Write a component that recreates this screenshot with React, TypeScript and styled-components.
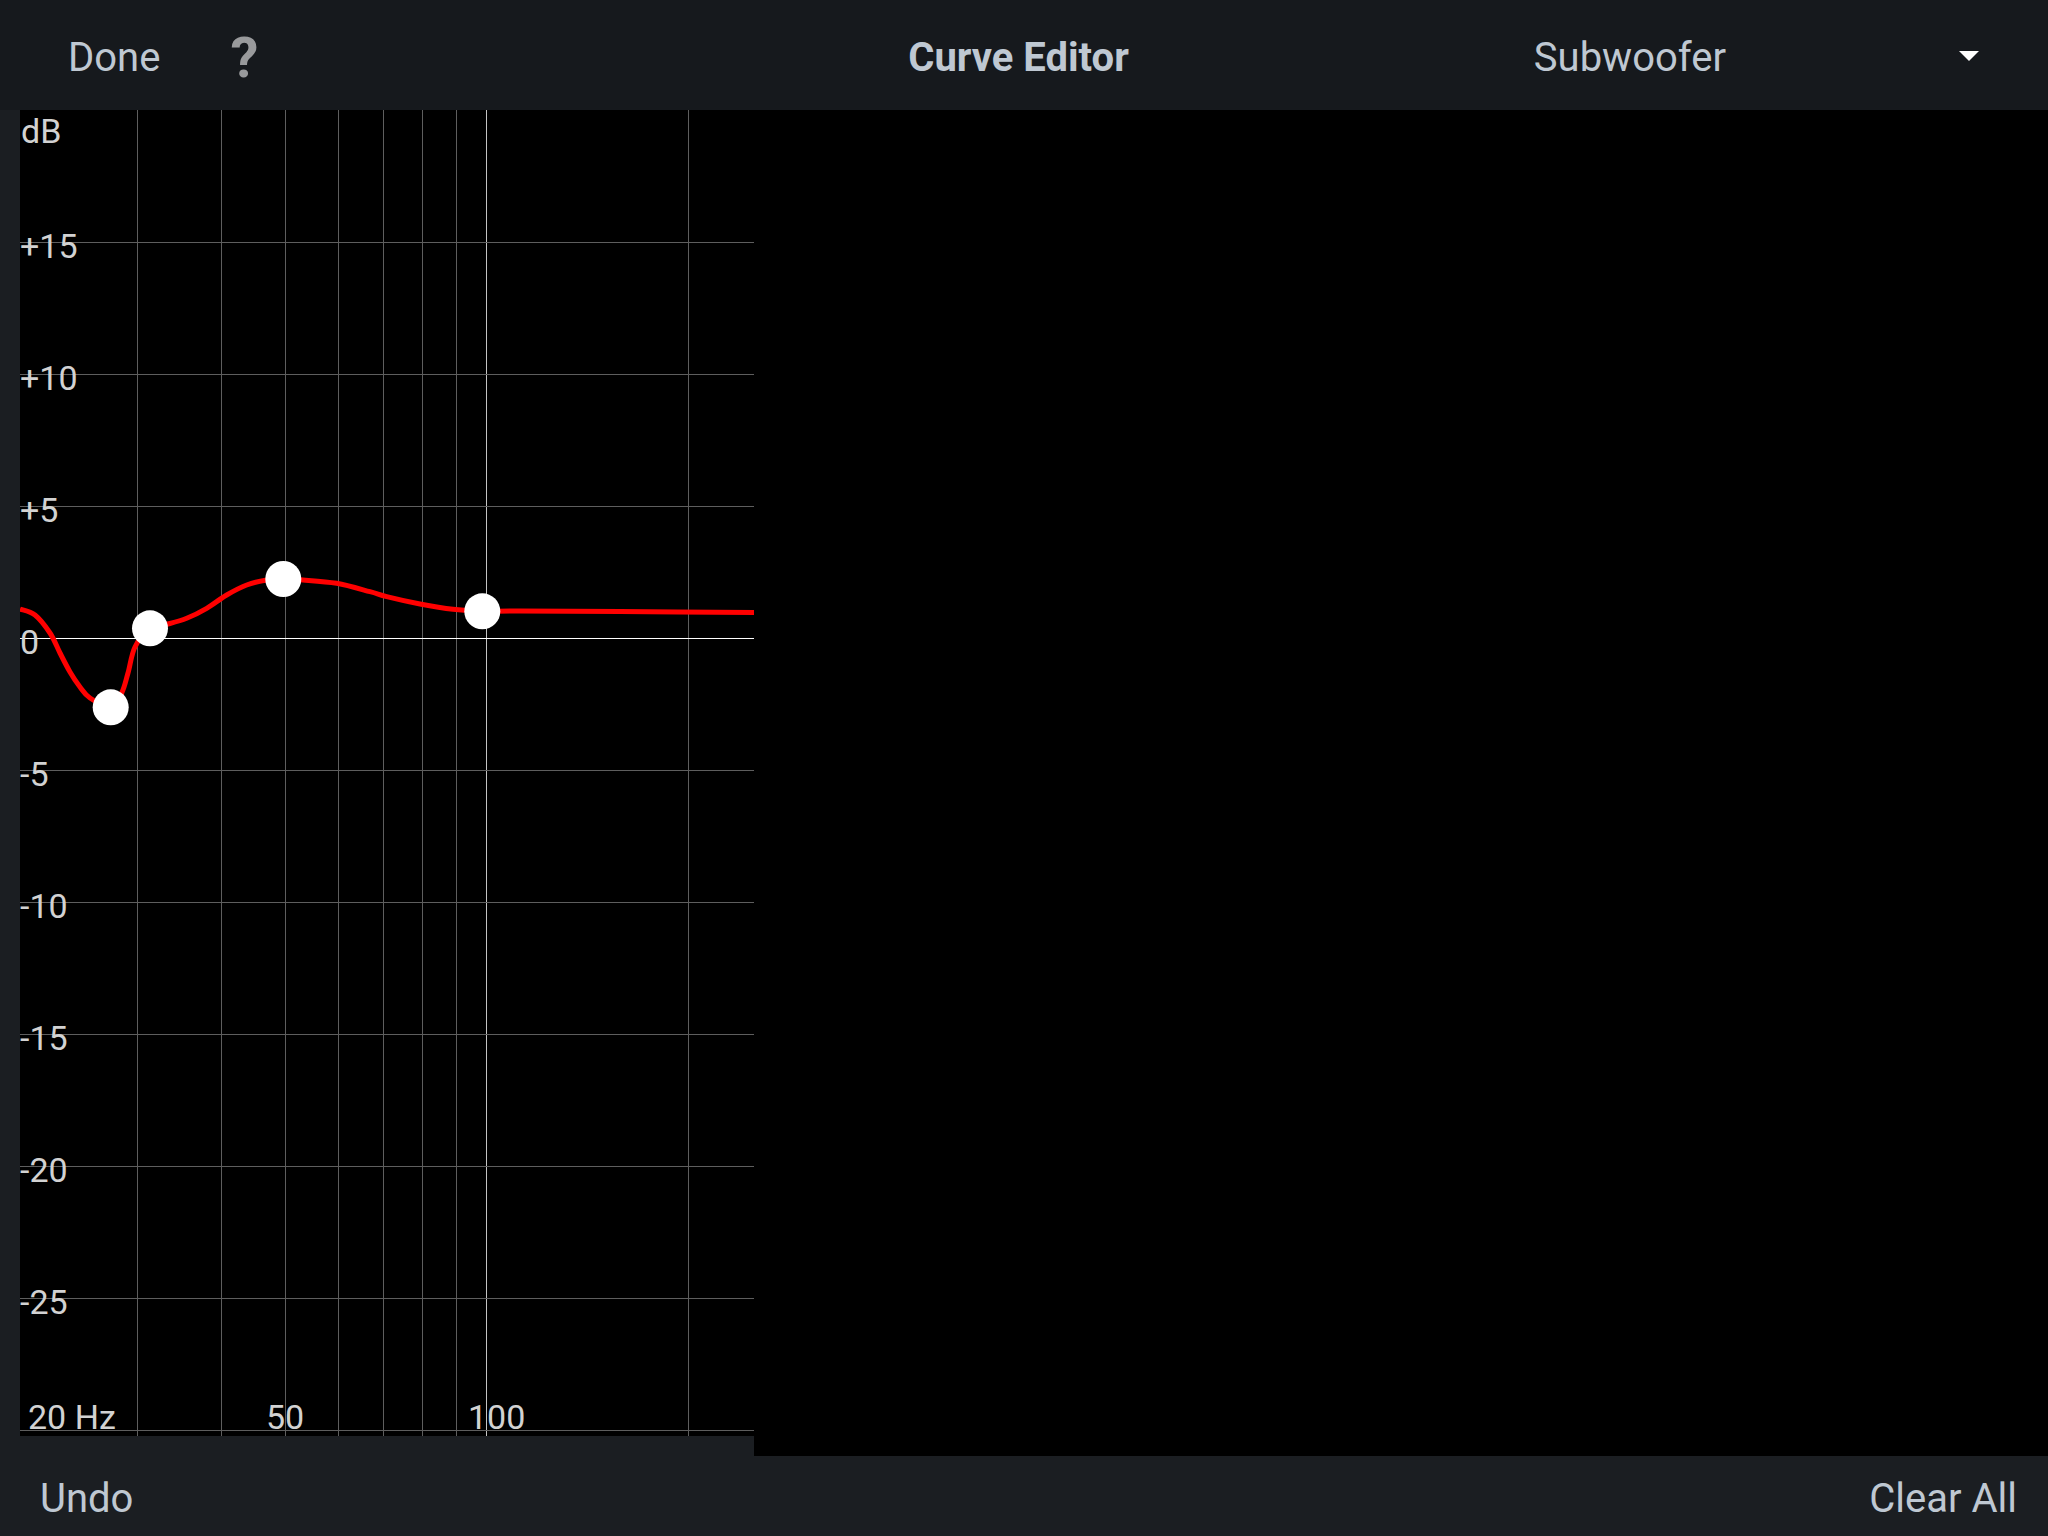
import React from 'react'
import styled, { createGlobalStyle } from 'styled-components'

const GlobalStyle = createGlobalStyle`
  html, body {
    margin: 0;
    padding: 0;
    background: #000;
  }
  body {
    font-family: Roboto, "Liberation Sans", sans-serif;
  }
`

const Screen = styled.div`
  width: 2048px;
  height: 1536px;
  display: flex;
  flex-direction: column;
  background: #000;
  overflow: hidden;
`

const Header = styled.div`
  height: 110px;
  flex: none;
  box-sizing: border-box;
  padding: 5px 0 0 68px;
  display: flex;
  align-items: center;
  background: #16191d;
`

const BarText = styled.span<{ $bold?: boolean; $gap?: number }>`
  font-size: 40px;
  font-weight: ${p => (p.$bold ? 700 : 400)};
  color: #bfc8d2;
  margin-left: ${p => p.$gap ?? 0}px;
  white-space: nowrap;
`

const Help = styled.span`
  font-size: 56px;
  font-weight: 700;
  color: #999a9c;
  margin-left: 70px;
`

const Caret = styled.svg`
  width: 20px;
  height: 10px;
  margin-left: 233px;
  margin-bottom: 4px;
`

const Body = styled.div`
  flex: 1;
  display: flex;
  min-height: 0;
`

const ChartColumn = styled.div`
  width: 754px;
  flex: none;
  display: flex;
  flex-direction: column;
  background: #1b1e22;
`

const ChartArea = styled.div`
  margin-left: 20px;
  width: 734px;
  height: 1326px;
  background: #000;
`

const Empty = styled.div`
  flex: 1;
  background: #000;
`

const Footer = styled.div`
  height: 80px;
  flex: none;
  box-sizing: border-box;
  padding: 5px 31px 0 40px;
  display: flex;
  align-items: center;
  justify-content: space-between;
  background: #1b1e22;
`

const Label = styled.text`
  font-family: Roboto, "Liberation Sans", sans-serif;
  font-size: 34px;
  fill: #d2d2d2;
`

const W = 734
const H = 1326

// log frequency axis, 668px per decade starting at 20 Hz
const xOf = (f: number) => 668 * Math.log10(f / 20)
// +20 dB at the top, 26.4px per dB
const yOf = (db: number) => 528 - db * 26.4

const freqLines = [30, 40, 50, 60, 70, 80, 90, 100, 200]
const dbLines = [15, 10, 5, 0, -5, -10, -15, -20, -25, -30]

const curvePts: [number, number][] = [
  [0, 499], [15, 505], [30, 523], [40, 543], [50, 562], [60, 577], [70, 588],
  [90.7, 597.3], [101.7, 583], [108, 563], [115, 537], [130, 518],
  [148, 514], [166.7, 508.3], [186.7, 498.3], [206.7, 485], [226.7, 475],
  [246.7, 470], [263.3, 469], [283, 470], [316.7, 473.3], [350, 481.7],
  [366.7, 486.7], [400, 494], [433, 499.3], [462.3, 501.3], [500, 501],
  [600, 501.5], [734, 502.5],
]

const handles: [number, number][] = [[90.7, 597.3], [130, 518.3], [263.3, 469], [462.3, 501.3]]

function smoothPath(pts: [number, number][]) {
  let d = `M${pts[0][0]},${pts[0][1]}`
  for (let i = 0; i < pts.length - 1; i++) {
    const p0 = pts[i - 1] || pts[i]
    const p1 = pts[i]
    const p2 = pts[i + 1]
    const p3 = pts[i + 2] || p2
    const c1x = p1[0] + (p2[0] - p0[0]) / 6
    const c1y = p1[1] + (p2[1] - p0[1]) / 6
    const c2x = p2[0] - (p3[0] - p1[0]) / 6
    const c2y = p2[1] - (p3[1] - p1[1]) / 6
    d += ` C${c1x.toFixed(1)},${c1y.toFixed(1)} ${c2x.toFixed(1)},${c2y.toFixed(1)} ${p2[0]},${p2[1]}`
  }
  return d
}

function dbText(db: number) {
  if (db > 0) return `+${db}`
  return `${db}`
}

function CurveChart() {
  return (
    <svg width={W} height={H} viewBox={`0 0 ${W} ${H}`}>
      {freqLines.map(f => (
        <line
          key={f}
          x1={xOf(f)}
          x2={xOf(f)}
          y1={0}
          y2={H}
          stroke={f === 100 ? '#c4c4c4' : '#5e5e5e'}
          strokeWidth={1}
          shapeRendering="crispEdges"
        />
      ))}
      {dbLines.map(db => (
        <line
          key={db}
          x1={0}
          x2={W}
          y1={yOf(db)}
          y2={yOf(db)}
          stroke={db === 0 ? '#ffffff' : '#5e5e5e'}
          strokeWidth={1}
          shapeRendering="crispEdges"
        />
      ))}

      <Label x={1} y={33}>dB</Label>
      {dbLines.filter(db => db > -30).map(db => (
        <Label key={db} x={0} y={yOf(db) + 16}>{dbText(db)}</Label>
      ))}

      <Label x={8} y={1319}>20 Hz</Label>
      <Label x={246} y={1319}>50</Label>
      <Label x={448} y={1319}>100</Label>

      <path d={smoothPath(curvePts)} fill="none" stroke="#ff0000" strokeWidth={5} strokeLinejoin="round" />
      {handles.map(([x, y], i) => (
        <circle key={i} cx={x} cy={y} r={18} fill="#ffffff" />
      ))}
    </svg>
  )
}

export default function App() {
  return (
    <>
      <GlobalStyle />
      <Screen>
        <Header>
          <BarText>Done</BarText>
          <Help>?</Help>
          <BarText $bold $gap={650}>Curve Editor</BarText>
          <BarText $gap={405}>Subwoofer</BarText>
          <Caret viewBox="0 0 20 10">
            <path d="M0,0 L20,0 L10,10 Z" fill="#ffffff" />
          </Caret>
        </Header>
        <Body>
          <ChartColumn>
            <ChartArea>
              <CurveChart />
            </ChartArea>
          </ChartColumn>
          <Empty />
        </Body>
        <Footer>
          <BarText>Undo</BarText>
          <BarText>Clear All</BarText>
        </Footer>
      </Screen>
    </>
  )
}
